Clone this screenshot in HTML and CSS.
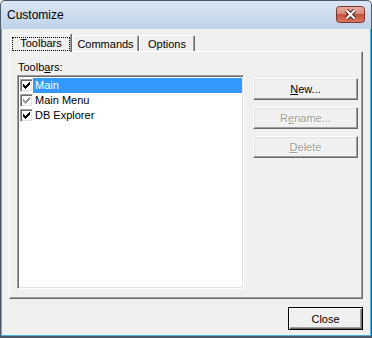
FILE: index.html
```html
<!DOCTYPE html>
<html lang="en">
<head>
    <meta charset="UTF-8">
    <title>Customize</title>
    <link rel="stylesheet" href="styles.css">
</head>
<body>
<div class="window">
    <div class="titlebar">
        <span class="title">Customize</span>
        <span class="close-x">
            <svg width="29" height="17" viewBox="0 0 29 17">
                <defs>
                    <linearGradient id="cg" x1="0" y1="0" x2="0" y2="1">
                        <stop offset="0" stop-color="#eab0a3"/>
                        <stop offset="0.45" stop-color="#d98b7a"/>
                        <stop offset="0.5" stop-color="#c5523f"/>
                        <stop offset="1" stop-color="#d97a62"/>
                    </linearGradient>
                </defs>
                <rect x="0.5" y="0.5" width="28" height="16" rx="3" fill="url(#cg)" stroke="#7b342b"/>
                <path d="M10.5 4.5 L18.5 12.5 M18.5 4.5 L10.5 12.5" stroke="#4a1d17" stroke-width="4.2"/>
                <path d="M10.5 4.5 L18.5 12.5 M18.5 4.5 L10.5 12.5" stroke="#fff" stroke-width="2.2"/>
            </svg>
        </span>
    </div>
    <div class="client">
        <div class="tabs">
            <div class="tab active"><span class="focus">Toolbars</span></div>
            <div class="tab tab-commands">Commands</div>
            <div class="tab tab-options">Options</div>
        </div>
        <div class="panel">
            <div class="label">Toolb<u>a</u>rs:</div>
            <div class="listbox">
                <div class="item selected">
                    <span class="check"><svg width="7" height="7" viewBox="0 0 7 7" shape-rendering="crispEdges"><path d="M0 2H1V3H2V4H3V3H4V2H5V1H6V0H7V3H6V4H5V5H4V6H3V7H2V6H1V5H0Z" fill="#000"/></svg></span>
                    <span class="item-text">Main</span>
                </div>
                <div class="item">
                    <span class="check"><svg width="7" height="7" viewBox="0 0 7 7" shape-rendering="crispEdges"><path d="M0 2H1V3H2V4H3V3H4V2H5V1H6V0H7V3H6V4H5V5H4V6H3V7H2V6H1V5H0Z" fill="#9a9a9a"/></svg></span>
                    <span class="item-text">Main Menu</span>
                </div>
                <div class="item">
                    <span class="check"><svg width="7" height="7" viewBox="0 0 7 7" shape-rendering="crispEdges"><path d="M0 2H1V3H2V4H3V3H4V2H5V1H6V0H7V3H6V4H5V5H4V6H3V7H2V6H1V5H0Z" fill="#000"/></svg></span>
                    <span class="item-text">DB Explorer</span>
                </div>
            </div>
            <div class="side-buttons">
                <button class="btn"><u>N</u>ew...</button>
                <button class="btn" disabled>R<u>e</u>name...</button>
                <button class="btn" disabled><u>D</u>elete</button>
            </div>
        </div>
        <div class="footer">
            <button class="btn btn-default">Close</button>
        </div>
    </div>
</div>
</body>
</html>
```

FILE: styles.css
```css
*{
    margin:0;
    padding:0;
    box-sizing: border-box;
}
body{
    width:372px;
    height:338px;
    overflow: hidden;
    font-family: "Liberation Sans", Arial, sans-serif;
    font-size:11px;
    color:#000;
    background-color: #fff;
}
.window{
    width:372px;
    height:338px;
    display: flex;
    flex-direction: column;
    border:1px solid #4b5a6a;
    border-bottom-width:2px;
    border-radius:5px 5px 0 0;
    background: linear-gradient(#dbe6f3, #bdd2ea 29px);
}
.titlebar{
    height:28px;
    display: flex;
    align-items: center;
    justify-content: space-between;
    padding:0 6px;
}
.title{
    font-size:12px;
}
.close-x{
    display: flex;
    margin-top:-2px;
}
.client{
    flex:1;
    background-color: #f0f0f0;
    border:1px solid #46b5e6;
    border-top:none;
    padding:4px 7px 0 7px;
}

/* tabs */
.tabs{
    display: flex;
    align-items: flex-end;
    height:18px;
    padding-left:1px;
}
.tab{
    height:16px;
    border:1px solid;
    border-color:#fff #696969 transparent #fff;
    border-bottom:none;
    border-radius:2px 2px 0 0;
    box-shadow: inset -1px 0 #a0a0a0;
    text-align: center;
    line-height:12px;
    padding-top:2px;
}
.tab.active{
    position: relative;
    z-index:1;
    width:62px;
    height:19px;
    margin-bottom:-1px;
    padding-top:0;
    background-color: #f0f0f0;
}
.tab-commands{
    width:67px;
}
.tab-options{
    width:56px;
}
.focus{
    display: block;
    margin:3px 1px 0 1px;
    height:14px;
    border:1px dotted #000;
    line-height:11px;
}

/* panel */
.panel{
    height:248px;
    display: grid;
    grid-template-columns: 227px 105px;
    grid-template-rows: 14px 214px;
    column-gap:9px;
    padding:9px 0 0 7px;
    border:1px solid;
    border-color:#fff #696969 #696969 #fff;
    box-shadow: inset -1px -1px #a0a0a0;
}
.label{
    grid-column:1;
    grid-row:1;
    padding-left:1px;
    line-height:13px;
}
.listbox{
    grid-column:1;
    grid-row:2;
    background-color: #fff;
    border:1px solid;
    border-color:#a0a0a0 #fff #fff #a0a0a0;
    box-shadow: inset 1px 1px #696969, inset -1px -1px #e3e3e3;
    padding:2px 1px 0 1px;
}
.item{
    display: flex;
    align-items: center;
    height:15px;
    padding-left:1px;
}
.check{
    width:13px;
    height:13px;
    display: flex;
    align-items: center;
    justify-content: center;
    background-color: #fff;
    border:1px solid;
    border-color:#a0a0a0 #fff #fff #a0a0a0;
    box-shadow: inset 1px 1px #696969, inset -1px -1px #e3e3e3;
}
.item-text{
    flex:1;
    height:15px;
    line-height:15px;
    padding-left:2px;
}
.item.selected .item-text{
    background-color: #3399ff;
    color:#fff;
}

/* buttons */
.side-buttons{
    grid-column:2;
    grid-row:2;
    display: flex;
    flex-direction: column;
    gap:7px;
    padding-top:3px;
}
.btn{
    width:105px;
    height:22px;
    font-family: inherit;
    font-size:11px;
    color:#000;
    background-color: #f0f0f0;
    border:1px solid;
    border-color:#fff #696969 #696969 #fff;
    box-shadow: inset -1px -1px #a0a0a0, inset 1px 1px #e3e3e3;
}
.btn:disabled{
    color:#a0a0a0;
    text-shadow: 1px 1px #fff;
}
.footer{
    display: flex;
    justify-content: flex-end;
    margin-top:8px;
}
.btn-default{
    width:75px;
    height:23px;
    border-color:#000;
    box-shadow: inset 1px 1px #fff, inset -1px -1px #696969, inset -2px -2px #a0a0a0;
}
```
